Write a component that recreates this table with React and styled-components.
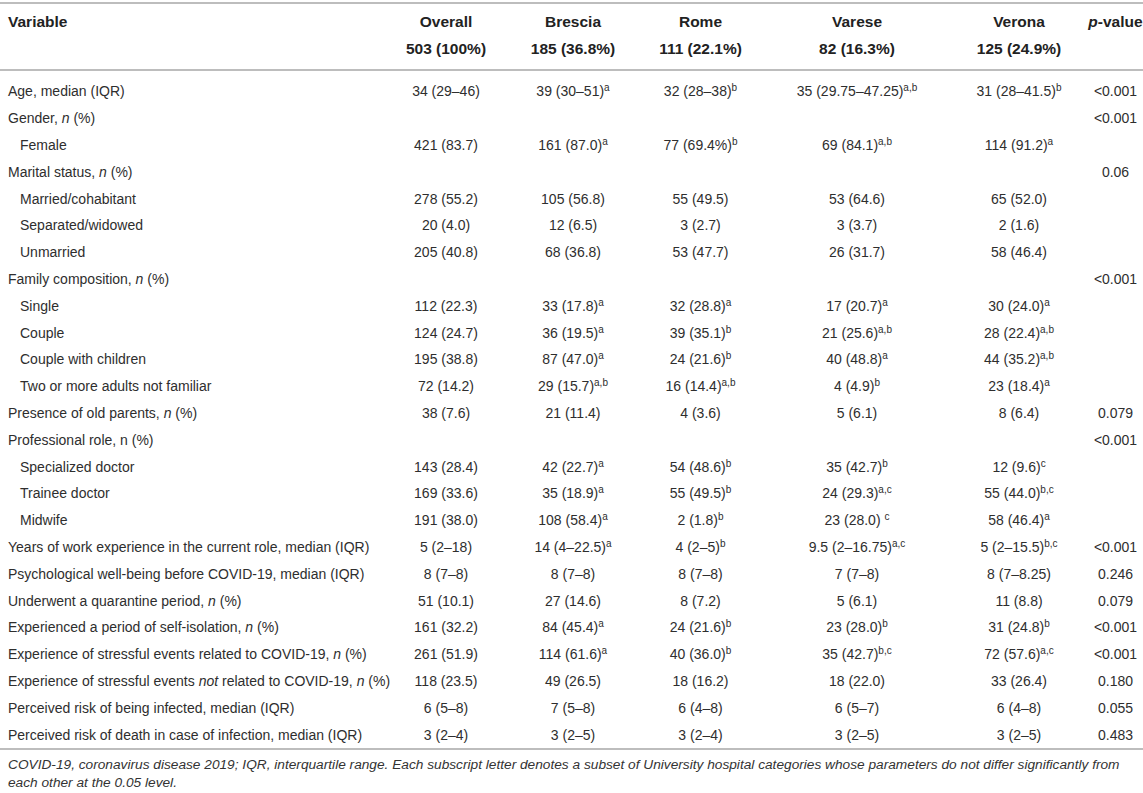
import React from "react";
import styled, { createGlobalStyle } from "styled-components";

const GlobalStyle = createGlobalStyle`
    body {
        margin: 0;
        background: #fff;
        font-family: "Liberation Sans", Arial, Helvetica, sans-serif;
        color: #333;
    }
`;

const COLS = "383px 126px 128px 127px 186px 138px 55px";

// value strings use "^" to mark the superscript letters
const rows = [
    {label: "Age, median (IQR)", values: ["34 (29–46)", "39 (30–51)^a", "32 (28–38)^b", "35 (29.75–47.25)^a,b", "31 (28–41.5)^b"], p: "<0.001"},
    {label: <>Gender, <i>n</i> (%)</>, values: [], p: "<0.001"},
    {label: "Female", sub: true, values: ["421 (83.7)", "161 (87.0)^a", "77 (69.4%)^b", "69 (84.1)^a,b", "114 (91.2)^a"]},
    {label: <>Marital status, <i>n</i> (%)</>, values: [], p: "0.06"},
    {label: "Married/cohabitant", sub: true, values: ["278 (55.2)", "105 (56.8)", "55 (49.5)", "53 (64.6)", "65 (52.0)"]},
    {label: "Separated/widowed", sub: true, values: ["20 (4.0)", "12 (6.5)", "3 (2.7)", "3 (3.7)", "2 (1.6)"]},
    {label: "Unmarried", sub: true, values: ["205 (40.8)", "68 (36.8)", "53 (47.7)", "26 (31.7)", "58 (46.4)"]},
    {label: <>Family composition, <i>n</i> (%)</>, values: [], p: "<0.001"},
    {label: "Single", sub: true, values: ["112 (22.3)", "33 (17.8)^a", "32 (28.8)^a", "17 (20.7)^a", "30 (24.0)^a"]},
    {label: "Couple", sub: true, values: ["124 (24.7)", "36 (19.5)^a", "39 (35.1)^b", "21 (25.6)^a,b", "28 (22.4)^a,b"]},
    {label: "Couple with children", sub: true, values: ["195 (38.8)", "87 (47.0)^a", "24 (21.6)^b", "40 (48.8)^a", "44 (35.2)^a,b"]},
    {label: "Two or more adults not familiar", sub: true, values: ["72 (14.2)", "29 (15.7)^a,b", "16 (14.4)^a,b", "4 (4.9)^b", "23 (18.4)^a"]},
    {label: <>Presence of old parents, <i>n</i> (%)</>, values: ["38 (7.6)", "21 (11.4)", "4 (3.6)", "5 (6.1)", "8 (6.4)"], p: "0.079"},
    {label: "Professional role, n (%)", values: [], p: "<0.001"},
    {label: "Specialized doctor", sub: true, values: ["143 (28.4)", "42 (22.7)^a", "54 (48.6)^b", "35 (42.7)^b", "12 (9.6)^c"]},
    {label: "Trainee doctor", sub: true, values: ["169 (33.6)", "35 (18.9)^a", "55 (49.5)^b", "24 (29.3)^a,c", "55 (44.0)^b,c"]},
    {label: "Midwife", sub: true, values: ["191 (38.0)", "108 (58.4)^a", "2 (1.8)^b", "23 (28.0) ^c", "58 (46.4)^a"]},
    {label: "Years of work experience in the current role, median (IQR)", values: ["5 (2–18)", "14 (4–22.5)^a", "4 (2–5)^b", "9.5 (2–16.75)^a,c", "5 (2–15.5)^b,c"], p: "<0.001"},
    {label: "Psychological well-being before COVID-19, median (IQR)", values: ["8 (7–8)", "8 (7–8)", "8 (7–8)", "7 (7–8)", "8 (7–8.25)"], p: "0.246"},
    {label: <>Underwent a quarantine period, <i>n</i> (%)</>, values: ["51 (10.1)", "27 (14.6)", "8 (7.2)", "5 (6.1)", "11 (8.8)"], p: "0.079"},
    {label: <>Experienced a period of self-isolation, <i>n</i> (%)</>, values: ["161 (32.2)", "84 (45.4)^a", "24 (21.6)^b", "23 (28.0)^b", "31 (24.8)^b"], p: "<0.001"},
    {label: <>Experience of stressful events related to COVID-19, <i>n</i> (%)</>, values: ["261 (51.9)", "114 (61.6)^a", "40 (36.0)^b", "35 (42.7)^b,c", "72 (57.6)^a,c"], p: "<0.001"},
    {label: <>Experience of stressful events <i>not</i> related to COVID-19, <i>n</i> (%)</>, values: ["118 (23.5)", "49 (26.5)", "18 (16.2)", "18 (22.0)", "33 (26.4)"], p: "0.180"},
    {label: "Perceived risk of being infected, median (IQR)", values: ["6 (5–8)", "7 (5–8)", "6 (4–8)", "6 (5–7)", "6 (4–8)"], p: "0.055"},
    {label: "Perceived risk of death in case of infection, median (IQR)", values: ["3 (2–4)", "3 (2–5)", "3 (2–4)", "3 (2–5)", "3 (2–5)"], p: "0.483"},
];

const Value = ({text}) => {
    const [main, sup] = text.split("^");
    return <>{main}{sup ? <Sup>{sup}</Sup> : null}</>;
};

const App = () => {
    return (
        <Page>
            <GlobalStyle/>
            <Head>
                <Row $height={27}>
                    <HeadCell $left>Variable</HeadCell>
                    <HeadCell>Overall</HeadCell>
                    <HeadCell>Brescia</HeadCell>
                    <HeadCell>Rome</HeadCell>
                    <HeadCell>Varese</HeadCell>
                    <HeadCell>Verona</HeadCell>
                    <HeadCell><i>p</i>-value</HeadCell>
                </Row>
                <Row $height={27}>
                    <HeadCell $left/>
                    <HeadCell>503 (100%)</HeadCell>
                    <HeadCell>185 (36.8%)</HeadCell>
                    <HeadCell>111 (22.1%)</HeadCell>
                    <HeadCell>82 (16.3%)</HeadCell>
                    <HeadCell>125 (24.9%)</HeadCell>
                    <HeadCell/>
                </Row>
            </Head>
            <Body>
                {rows.map((row, i) => (
                    <Row key={i} $height={26.8}>
                        <Cell $left $sub={row.sub}>{row.label}</Cell>
                        {[0, 1, 2, 3, 4].map(k => (
                            <Cell key={k}>
                                {row.values[k] ? <Value text={row.values[k]}/> : null}
                            </Cell>
                        ))}
                        <Cell>{row.p || ""}</Cell>
                    </Row>
                ))}
            </Body>
            <Footnote>
                COVID-19, coronavirus disease 2019; IQR, interquartile range. Each subscript letter denotes a subset of University hospital categories whose parameters do not differ significantly from each other at the 0.05 level.
            </Footnote>
        </Page>
    );
};

export default App;

const Page = styled.div`
    width: 1143px;
    padding-top: 2px;
`;

const Head = styled.div`
    border-top: 2px solid #bdbdbd;
    border-bottom: 2px solid #bdbdbd;
    padding: 4px 0 7px;
`;

const Body = styled.div`
    padding-top: 7px;
    border-bottom: 2px solid #bdbdbd;
`;

const Row = styled.div`
    display: grid;
    grid-template-columns: ${COLS};
    height: ${p => p.$height}px;
    align-items: center;
`;

const HeadCell = styled.div`
    font-size: 15.5px;
    font-weight: bold;
    color: #222;
    text-align: ${p => (p.$left ? "left" : "center")};
    padding-left: ${p => (p.$left ? "8px" : "0")};
    white-space: nowrap;
`;

const Cell = styled.div`
    font-size: 14px;
    color: #2e2e2e;
    text-align: ${p => (p.$left ? "left" : "center")};
    padding-left: ${p => (p.$left ? (p.$sub ? "20px" : "8px") : "0")};
    white-space: nowrap;
`;

const Sup = styled.span`
    font-size: 10px;
    vertical-align: 5px;
    line-height: 0;
`;

const Footnote = styled.p`
    margin: 0;
    padding: 6px 0 0 8px;
    font-size: 13.7px;
    font-style: italic;
    line-height: 18px;
    color: #333;
`;
